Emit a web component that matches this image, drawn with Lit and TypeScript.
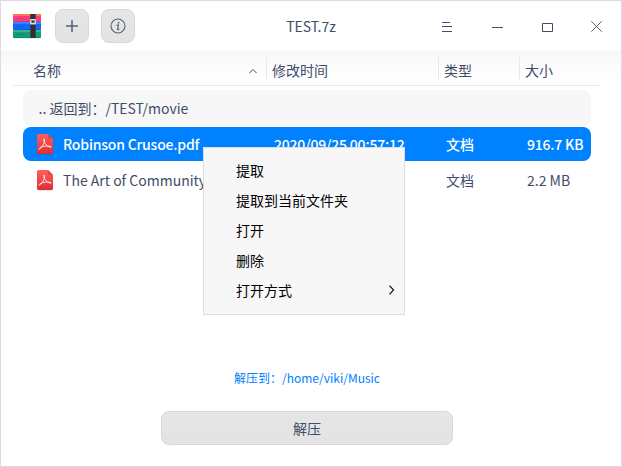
import { LitElement, html, css, svg } from "lit";
import { customElement } from "lit/decorators.js";
import { classMap } from "lit/directives/class-map.js";

interface Entry {
  name: string;
  modified: string;
  kind: string;
  size: string;
  selected: boolean;
}

const entries: Entry[] = [
  { name: "Robinson Crusoe.pdf", modified: "2020/09/25 00:57:12", kind: "文档", size: "916.7 KB", selected: true },
  { name: "The Art of Community", modified: "", kind: "文档", size: "2.2 MB", selected: false },
];

const menuItems = ["提取", "提取到当前文件夹", "打开", "删除", "打开方式"];

@customElement("pdf-icon")
class PdfIcon extends LitElement {
  static styles = css`
    :host { display: block; width: 18px; height: 22px; }
    svg { display: block; }
  `;
  render() {
    return html`<svg width="18" height="22" viewBox="0 0 18 22">
      <defs><linearGradient id="g" x1="0" y1="0" x2="0" y2="1">
        <stop offset="0" stop-color="#ff5f5f" /><stop offset="1" stop-color="#de2f33" />
      </linearGradient></defs>
      <path d="M2.5 2H11.5L17 6.6V20a1.700 1.700 0 0 1-1.700 1.700H2.700A1.700 1.700 0 0 1 1 20V3.500a1.500 1.500 0 0 1 1.500-1.500z" fill="#000" opacity=".12" />
      <path d="M2.5 1H12L17 6V19.400a1.600 1.600 0 0 1-1.600 1.600H2.600A1.600 1.600 0 0 1 1 19.400V2.600A1.600 1.600 0 0 1 2.500 1z" fill="url(#g)" />
      <path d="M12 1L17 6H13.200a1.200 1.200 0 0 1-1.200-1.200z" fill="#d9474a" />
      <path d="M8 6.200C9.600 7.500 7.500 13 3.600 16.200M8 6.200C7.200 8.500 10 13.500 14.700 14.300M3 15.600C5.500 13.400 10 12.300 14.900 13.500" fill="none" stroke="#fff" stroke-width=".8" stroke-linecap="round" />
    </svg>`;
  }
}

@customElement("app-root")
class AppRoot extends LitElement {
  static styles = css`
    :host {
      display: block;
      position: relative;
      box-sizing: border-box;
      width: 622px;
      height: 467px;
      overflow: hidden;
      border: 1px solid #dcdcdc;
      background: #fff;
      color: #414d68;
      font: 14px/20px "Noto Sans CJK SC", "Noto Sans", sans-serif;
      white-space: nowrap;
    }
    * { box-sizing: border-box; }
    svg { display: block; }
    .titlebar {
      display: grid;
      grid-template-columns: 1fr auto 1fr;
      height: 50px;
      align-items: center;
    }
    .tools { display: flex; align-items: center; padding-left: 12px; }
    .logo { margin-right: 14px; }
    .tool {
      display: grid;
      place-items: center;
      width: 34px;
      height: 34px;
      margin-right: 12px;
      padding: 0;
      border: 1px solid #d8d8d8;
      border-radius: 8px;
      background: linear-gradient(#e6e6e6, #e3e3e3);
    }
    .controls { display: flex; justify-content: flex-end; }
    .control { display: grid; place-items: center; width: 50px; height: 50px; padding: 2px 0 0 2px; }
    .body { background: linear-gradient(#f7f7f7, #fff 28px); height: 415px; }
    .columns, .row { display: grid; }
    .columns {
      grid-template-columns: 239px 172px 81px 1fr;
      height: 35px;
      margin: 0 20px 0 12px;
      padding-left: 14px;
      border-bottom: 1px solid #e9e9e9;
      align-items: center;
    }
    .column {
      display: flex;
      align-items: center;
      justify-content: space-between;
      height: 22px;
      padding-left: 5px;
      padding-top: 4px;
      border-left: 1px solid #e7e7e7;
    }
    .column.first { border-color: transparent; }
    .sort { margin: 2px 8px 0 0; }
    .list { padding: 4px 30px 0 22px; }
    .back {
      height: 36px;
      margin-bottom: 1px;
      padding: 8px 15.5px;
      border-radius: 8px;
      background: #f7f7f7;
    }
    .row {
      grid-template-columns: 40px 211px 172px 81px 1fr;
      height: 34px;
      margin-bottom: 2px;
      border-radius: 8px;
      align-items: center;
    }
    .row pdf-icon { margin: 0 0 0 13px; }
    .row.selected { background: #0081ff; color: #fff; font-weight: 500; }
    .row.selected .latin { letter-spacing: -0.19px; }
    .destination {
      margin-top: 171px;
      padding-right: 8px;
      color: #0081ff;
      font-size: 12px;
      text-align: center;
    }
    .extract {
      display: grid;
      place-items: center;
      width: 292px;
      height: 34px;
      margin: 23px 0 0 160px;
      padding: 0;
      border: 1px solid #d8d8d8;
      border-radius: 8px;
      background: linear-gradient(#e6e6e6, #e3e3e3);
      color: inherit;
      font: inherit;
    }
    .menu {
      position: absolute;
      left: 202px;
      top: 146px;
      width: 202px;
      height: 168px;
      padding-top: 7px;
      border: 1px solid #dfdfdf;
      background: #f7f7f7;
      color: #000;
    }
    .item {
      display: flex;
      align-items: center;
      justify-content: space-between;
      height: 30px;
      padding: 0 9px 0 32px;
    }
  `;

  private logo() {
    const layer = (y: number, light: string, base: string, edge: string) => svg`
      <rect x="0" y=${y} width="28" height="8" rx="1" fill=${base} />
      <rect x="0" y=${y} width="28" height="2" rx="1" fill=${light} />
      <rect x="0.300" y=${y + 7} width="27.400" height="1" fill=${edge} opacity=".6" />
      <path d=${`M4 ${y + 4.5}h4M9 ${y + 5}h2`} stroke=${edge} stroke-width="1.200" />`;
    return html`<svg class="logo" width="28" height="26" viewBox="0 0 28 26">
      <rect x="1" y="23" width="26" height="2.500" rx="1" fill="#000" opacity=".15" />
      ${layer(1, "#ff7657", "#fa3e7b", "#d62d6d")}
      ${layer(9, "#2b87ff", "#1266fa", "#0c50cc")}
      ${layer(17, "#31b58d", "#149b78", "#0c8060")}
      <rect x="17.300" y="1" width="5.400" height="24" fill="#303136" />
      <rect x="17" y="6" width="6" height="5.500" rx=".8" fill="#d8d8da" />
      <rect x="18.500" y="7" width="3" height="2.700" fill="#303136" />
      <path d="M20 6.500v1.500" stroke="#eee" />
    </svg>`;
  }

  render() {
    return html`
      <header class="titlebar">
        <div class="tools">
          ${this.logo()}
          <button class="tool" aria-label="添加">
            <svg width="12" height="12" stroke="#52617c" stroke-width="1.500"><path d="M0 6H12M6 0V12" /></svg>
          </button>
          <button class="tool" aria-label="信息">
            <svg width="16" height="16" fill="none" stroke="#52617c">
              <circle cx="8" cy="8" r="7" stroke-width="1.100" />
              <circle cx="8.600" cy="4.700" r=".9" fill="#52617c" stroke="none" />
              <path d="M6.400 7.300L8.500 6.900L7.500 11.300Q7.500 12 9.400 11.100" stroke-width="1.100" />
            </svg>
          </button>
        </div>
        <div>TEST.7z</div>
        <div class="controls">
          <div class="control"><svg width="10" height="10" fill="#414d68"><path d="M0 0h8v1H0zM0 4h10v1H0zM0 9h10v1H0z" /></svg></div>
          <div class="control"><svg width="12" height="2" fill="#414d68"><path d="M1 1h11v1H1z" /></svg></div>
          <div class="control"><svg width="12" height="10" fill="none" stroke="#414d68"><path d="M1.500 1.500h10v8h-10z" /></svg></div>
          <div class="control"><svg width="12" height="12" fill="none" stroke="#414d68" stroke-width=".9"><path d="M.3.3l10.400 10.400m0-10.400l-10.400 10.400" /></svg></div>
        </div>
      </header>
      <main class="body">
        <div class="columns">
          <div class="column first">名称
            <svg class="sort" width="10" height="6" fill="none" stroke="#414d68"><path d="M1.500 5L5 1.500L8.500 5" /></svg>
          </div>
          <div class="column">修改时间</div>
          <div class="column">类型</div>
          <div class="column">大小</div>
        </div>
        <div class="list">
          <div class="back">.. 返回到：/TEST/movie</div>
          ${entries.map((e) => html`
            <div class=${classMap({ row: true, selected: e.selected })}>
              <pdf-icon></pdf-icon>
              <span class="latin">${e.name}</span><span class="latin">${e.modified}</span><span>${e.kind}</span><span class="latin">${e.size}</span>
            </div>`)}
        </div>
        <div class="destination">解压到：/home/viki/Music</div>
        <button class="extract">解压</button>
      </main>
      <nav class="menu">
        ${menuItems.map((label, i) => html`
          <div class="item">${label}
            ${i === menuItems.length - 1
              ? html`<svg width="7" height="10" fill="none" stroke="#111" stroke-width="1.200"><path d="M1.500.7L5.500 5L1.500 9.300" /></svg>`
              : ""}
          </div>`)}
      </nav>
    `;
  }
}
